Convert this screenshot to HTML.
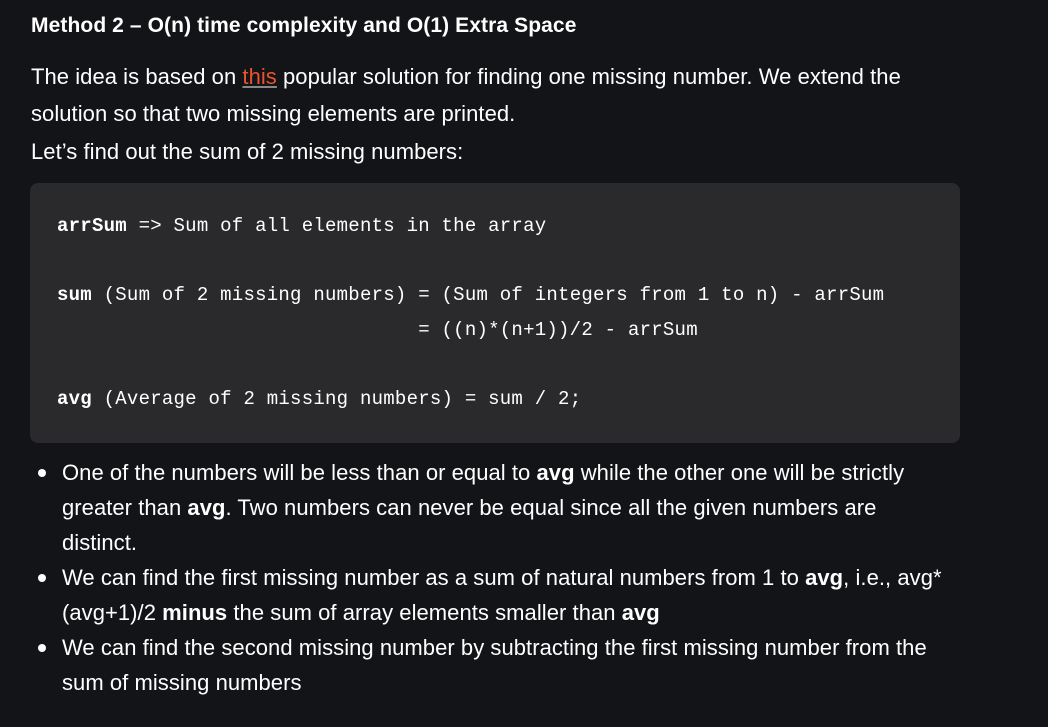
<!DOCTYPE html>
<html><head><style>
html,body{margin:0;padding:0;background:#131417;width:1048px;height:727px;overflow:hidden}
body{font-family:"Liberation Sans",sans-serif;color:#fff;}
.t{position:absolute;white-space:nowrap;font-size:22px;letter-spacing:0.05px;line-height:24px}
h1{position:absolute;left:31px;top:14px;margin:0;font-size:21px;font-weight:bold;letter-spacing:0.1px;white-space:nowrap}
a{color:#e9542e;text-decoration:underline;text-decoration-color:#888}
.code{position:absolute;left:30px;top:183px;width:930px;height:260px;background:#2a2a2c;border-radius:8px}
.c{position:absolute;left:57px;font-family:"Liberation Mono",monospace;font-size:19px;white-space:pre;line-height:22px;letter-spacing:0.25px}
.dot{position:absolute;left:38px;width:8px;height:8px;border-radius:50%;background:#fff}
</style></head><body>
<h1>Method 2 – O(n) time complexity and O(1) Extra Space</h1>
<div class="t" style="left:31px;top:65px">The idea is based on <a>this</a> popular solution for finding one missing number. We extend the</div>
<div class="t" style="left:31px;top:102px">solution so that two missing elements are printed.</div>
<div class="t" style="left:31px;top:140px">Let’s find out the sum of 2 missing numbers:</div>
<div class="code"></div>
<div class="c" style="top:215px"><b>arrSum</b> =&gt; Sum of all elements in the array</div>
<div class="c" style="top:284px"><b>sum</b> (Sum of 2 missing numbers) = (Sum of integers from 1 to n) - arrSum</div>
<div class="c" style="top:319px">                               = ((n)*(n+1))/2 - arrSum</div>
<div class="c" style="top:388px"><b>avg</b> (Average of 2 missing numbers) = sum / 2;</div>
<div class="dot" style="top:469px"></div>
<div class="t" style="left:62px;top:461px">One of the numbers will be less than or equal to <b>avg</b> while the other one will be strictly</div>
<div class="t" style="left:62px;top:496px">greater than <b>avg</b>. Two numbers can never be equal since all the given numbers are</div>
<div class="t" style="left:62px;top:531px">distinct.</div>
<div class="dot" style="top:574px"></div>
<div class="t" style="left:62px;top:566px">We can find the first missing number as a sum of natural numbers from 1 to <b>avg</b>, i.e., avg*</div>
<div class="t" style="left:62px;top:601px">(avg+1)/2 <b>minus</b> the sum of array elements smaller than <b>avg</b></div>
<div class="dot" style="top:644px"></div>
<div class="t" style="left:62px;top:636px">We can find the second missing number by subtracting the first missing number from the</div>
<div class="t" style="left:62px;top:671px">sum of missing numbers</div>
</body></html>
